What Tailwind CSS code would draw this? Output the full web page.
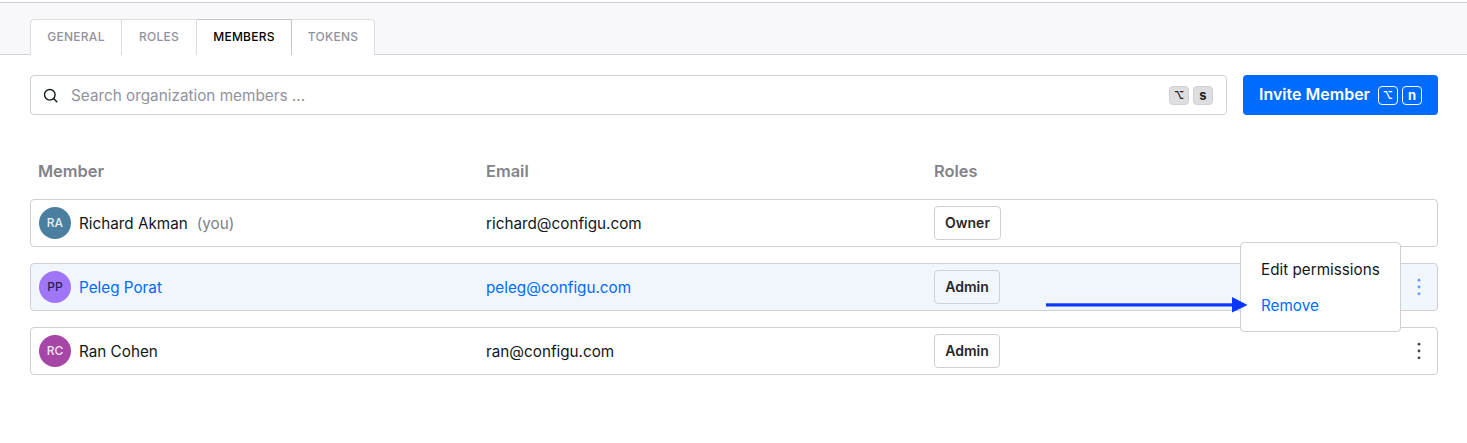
<!DOCTYPE html>
<html>
<head>
<meta charset="utf-8">
<script src="https://cdn.jsdelivr.net/npm/@tailwindcss/browser@4"></script>
</head>
<body class="bg-white font-['Inter',sans-serif] text-[#11181c] overflow-hidden">
<div class="relative w-[1467px] h-[443px] pt-[2px]">
  <div class="h-[53px] border-t border-b border-[#cfcfd6] bg-[#f8f8fa] px-[30px] flex items-end">
    <div class="flex -mb-px h-[36px] text-[12px] font-medium tracking-[0.25px]">
      <div class="w-[92px] pb-[2px] flex items-center justify-center bg-white border border-b-0 border-[#dcdce1] rounded-tl-[4px] text-[#92929e]">GENERAL</div>
      <div class="w-[75px] pb-[2px] flex items-center justify-center bg-white border border-l-0 border-b-0 border-[#dcdce1] text-[#92929e]">ROLES</div>
      <div class="w-[95px] pb-[2px] flex items-center justify-center bg-white border border-l-0 border-b-0 border-[#c4c4cc] text-black">MEMBERS</div>
      <div class="w-[83px] pb-[2px] flex items-center justify-center bg-white border border-l-0 border-b-0 border-[#dcdce1] rounded-tr-[4px] text-[#92929e]">TOKENS</div>
    </div>
  </div>

  <div class="mt-[20px] ml-[30px] w-[1408px] flex gap-[16px]">
    <div class="flex-1 h-[40px] border border-[#cfcfd6] rounded-[4px] flex items-center pl-[12px] pr-[13px]">
      <svg class="w-[15px] h-[15px] shrink-0" viewBox="0 0 15 15" fill="none" stroke="#11181c" stroke-width="1.4" stroke-linecap="round"><circle cx="6.8" cy="6.8" r="5.3"/><path d="M10.8 10.8L13.8 13.8"/></svg>
      <span class="ml-[13px] flex-1 pt-[2px] text-[15.3px] text-[#92929e]">Search organization members ...</span>
      <div class="flex gap-[4px]">
        <kbd class="w-[20px] h-[19px] rounded-[4px] bg-[#dedee0] border border-[#d0d0d4] flex items-center justify-center text-[10px] font-bold font-['Inter',sans-serif] text-[#222] leading-none">⌥</kbd>
        <kbd class="w-[20px] h-[19px] rounded-[4px] bg-[#dedee0] border border-[#d0d0d4] flex items-center justify-center text-[13px] font-bold font-['Inter',sans-serif] text-[#222] leading-none">s</kbd>
      </div>
    </div>
    <div class="w-[195px] h-[40px] rounded-[4px] bg-[#006bff] text-white flex items-center pl-[16px]">
      <span class="text-[16px] font-semibold pb-[2px]">Invite Member</span>
      <div class="flex gap-[4px] ml-[8px]">
        <kbd class="w-[20px] h-[19px] rounded-[4px] border border-white flex items-center justify-center text-[10px] font-bold font-['Inter',sans-serif] leading-none">⌥</kbd>
        <kbd class="w-[20px] h-[19px] rounded-[4px] border border-white flex items-center justify-center text-[13px] font-bold font-['Inter',sans-serif] leading-none">n</kbd>
      </div>
    </div>
  </div>

  <div class="mt-[44px] ml-[30px] w-[1408px] grid grid-cols-[448px_448px_1fr] pl-[8px] h-[20px] items-center text-[16.4px] font-semibold text-[#838389]">
    <div>Member</div><div>Email</div><div>Roles</div>
  </div>

  <div class="mt-[20px] ml-[30px] w-[1408px] flex flex-col gap-[16px] text-[15.25px]">
    <div class="h-[48px] border border-[#cfcfd6] rounded-[4px] grid grid-cols-[448px_448px_1fr] items-center pl-[7px]">
      <div class="flex items-center pl-px">
        <div class="w-[32px] h-[32px] rounded-full bg-[#4a7f9f] text-[#e6f0f5] flex items-center justify-center text-[12px] font-medium">RA</div>
        <span class="ml-[8px] pt-[2px] text-[#11181c]">Richard Akman</span>
        <span class="ml-[9px] pt-[2px] text-[#7e7e88]">(you)</span>
      </div>
      <div class="pt-[2px]">richard@configu.com</div>
      <div class="flex"><span class="h-[34px] w-[67px] pb-[2px] justify-center border border-[#cfcfd6] rounded-[4px] flex items-center text-[14px] font-semibold text-[#27272a]">Owner</span></div>
    </div>

    <div class="h-[48px] border border-[#cfcfd6] rounded-[4px] bg-[#f1f5fc] grid grid-cols-[448px_448px_1fr] items-center pl-[7px] text-[#006bff]">
      <div class="flex items-center pl-px">
        <div class="w-[32px] h-[32px] rounded-full bg-[#a076f9] text-[#2e1a52] flex items-center justify-center text-[12px] font-medium">PP</div>
        <span class="ml-[8px] pt-[2px]">Peleg Porat</span>
      </div>
      <div class="pt-[2px]">peleg@configu.com</div>
      <div class="flex items-center justify-between pr-[10px]">
        <span class="h-[34px] w-[66px] pb-[2px] justify-center border border-[#cfcfd6] rounded-[4px] flex items-center text-[14px] font-semibold text-[#27272a]">Admin</span>
        <svg class="w-[16px] h-[20px]" viewBox="0 0 16 20" fill="#5b9bff"><circle cx="8" cy="3.2" r="1.4"/><circle cx="8" cy="10" r="1.4"/><circle cx="8" cy="16.8" r="1.4"/></svg>
      </div>
    </div>

    <div class="h-[48px] border border-[#cfcfd6] rounded-[4px] grid grid-cols-[448px_448px_1fr] items-center pl-[7px]">
      <div class="flex items-center pl-px">
        <div class="w-[32px] h-[32px] rounded-full bg-[#a646a6] text-[#f5e3f5] flex items-center justify-center text-[12px] font-medium">RC</div>
        <span class="ml-[8px] pt-[2px]">Ran Cohen</span>
      </div>
      <div class="pt-[2px]">ran@configu.com</div>
      <div class="flex items-center justify-between pr-[10px]">
        <span class="h-[34px] w-[66px] pb-[2px] justify-center border border-[#cfcfd6] rounded-[4px] flex items-center text-[14px] font-semibold text-[#27272a]">Admin</span>
        <svg class="w-[16px] h-[20px]" viewBox="0 0 16 20" fill="#44444a"><circle cx="8" cy="3.2" r="1.4"/><circle cx="8" cy="10" r="1.4"/><circle cx="8" cy="16.8" r="1.4"/></svg>
      </div>
    </div>
  </div>

  <div class="absolute left-[1240px] top-[242px] w-[161px] h-[90px] bg-white border border-[#cfcfd6] rounded-[4px] pl-[20px] pt-[9px] text-[15.25px] leading-[36px]">
    <div class="text-[#11181c]">Edit permissions</div>
    <div class="text-[#006bff]">Remove</div>
  </div>

  <svg class="absolute left-[1046px] top-[297px]" width="202" height="16" viewBox="0 0 202 16"><rect x="0" y="6.3" width="188" height="3.2" fill="#0b36ff"/><path d="M186 0L201.5 7.9L186 15.5Z" fill="#0b36ff"/></svg>
</div>
</body>
</html>
